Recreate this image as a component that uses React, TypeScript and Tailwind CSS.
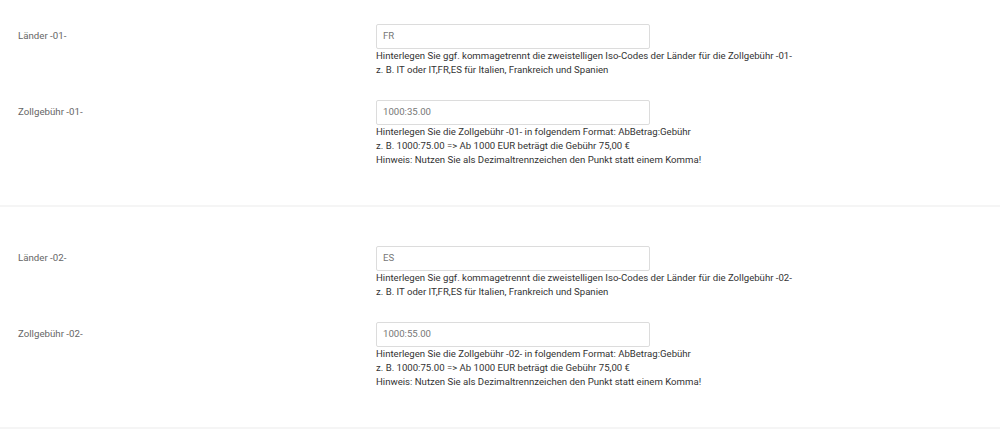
import React from "react";

type Row = { label: string; value: string; help: string[] };

const sections: Row[][] = [
  [
    {
      label: "Länder -01-",
      value: "FR",
      help: [
        "Hinterlegen Sie ggf. kommagetrennt die zweistelligen Iso-Codes der Länder für die Zollgebühr -01-",
        "z. B. IT oder IT,FR,ES für Italien, Frankreich und Spanien",
      ],
    },
    {
      label: "Zollgebühr -01-",
      value: "1000:35.00",
      help: [
        "Hinterlegen Sie die Zollgebühr -01- in folgendem Format: AbBetrag:Gebühr",
        "z. B. 1000:75.00 => Ab 1000 EUR beträgt die Gebühr 75,00 €",
        "Hinweis: Nutzen Sie als Dezimaltrennzeichen den Punkt statt einem Komma!",
      ],
    },
  ],
  [
    {
      label: "Länder -02-",
      value: "ES",
      help: [
        "Hinterlegen Sie ggf. kommagetrennt die zweistelligen Iso-Codes der Länder für die Zollgebühr -02-",
        "z. B. IT oder IT,FR,ES für Italien, Frankreich und Spanien",
      ],
    },
    {
      label: "Zollgebühr -02-",
      value: "1000:55.00",
      help: [
        "Hinterlegen Sie die Zollgebühr -02- in folgendem Format: AbBetrag:Gebühr",
        "z. B. 1000:75.00 => Ab 1000 EUR beträgt die Gebühr 75,00 €",
        "Hinweis: Nutzen Sie als Dezimaltrennzeichen den Punkt statt einem Komma!",
      ],
    },
  ],
];

function FieldRow({ row }: { row: Row }) {
  return (
    <div className="flex">
      <div className="w-[376px] shrink-0 pl-[18px] h-[25px] flex items-center text-[9.7px] text-[#666]">
        {row.label}
      </div>
      <div className="flex flex-col">
        <div className="w-[274px] h-[25px] border border-[#dcdcdc] rounded-[2px] bg-white flex items-center px-[6px] text-[9.6px] text-[#777]">
          {row.value}
        </div>
        <div className="text-[9.6px] leading-[14px] text-[#333]">
          {row.help.map((h, i) => (
            <div key={i} className="whitespace-nowrap">{h}</div>
          ))}
        </div>
      </div>
    </div>
  );
}

export default function App() {
  return (
    <div
      className="w-[1000px] h-[430px] bg-white overflow-hidden"
      style={{ fontFamily: "Roboto, 'Liberation Sans', sans-serif" }}
    >
      {sections.map((rows, si) => (
        <div
          key={si}
          className={
            "flex flex-col gap-[23px] pb-[38px] border-b-2 border-[#f5f5f5] " +
            (si === 0 ? "pt-[24px]" : "pt-[39px]")
          }
        >
          {rows.map((r, ri) => (
            <FieldRow key={ri} row={r} />
          ))}
        </div>
      ))}
    </div>
  );
}
